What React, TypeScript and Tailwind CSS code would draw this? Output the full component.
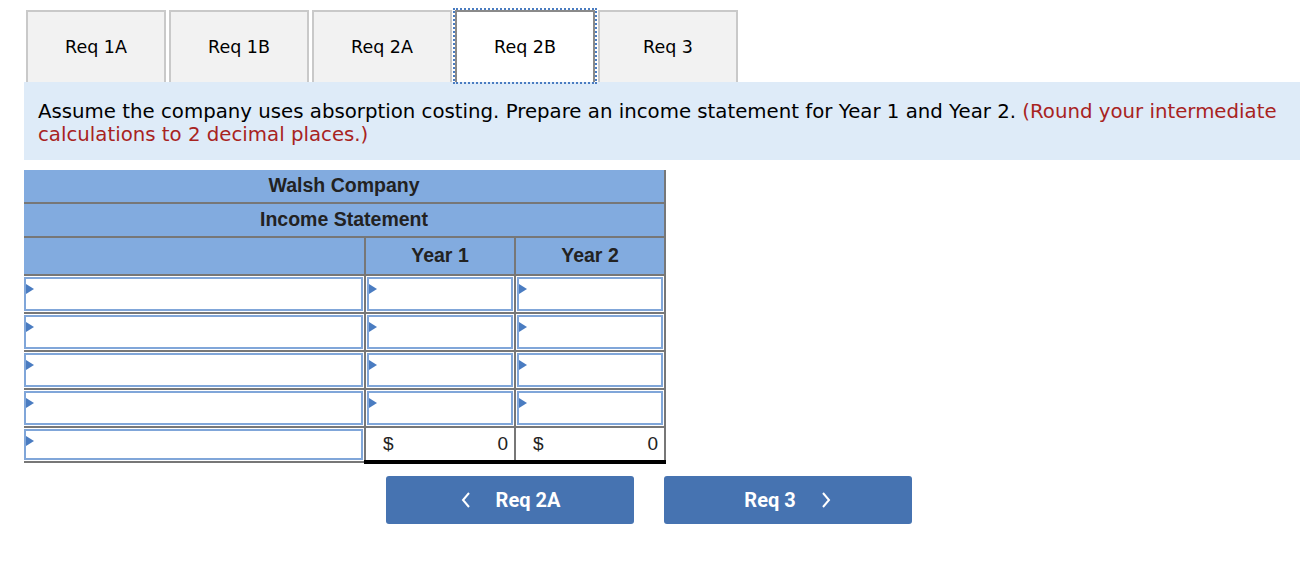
import React from "react";

const tabs = ["Req 1A", "Req 1B", "Req 2A", "Req 2B", "Req 3"];

function Marker() {
  return (
    <span className="absolute left-0 top-[5px] w-0 h-0 border-y-[5px] border-y-transparent border-l-[8px] border-l-[#4a7cc1]" />
  );
}

function InputCell({ topBlack = false, first = false, short = false }: { topBlack?: boolean; first?: boolean; short?: boolean }) {
  return (
    <td
      className={`border-2 border-[#777777] ${first ? "border-l-0 pl-0 pr-[1px] py-[1px]" : "p-[1px]"} ${topBlack ? "border-t-black" : ""}`}
    >
      <div className={`relative ${short ? "h-[31px]" : "h-[34px]"} bg-white border-2 border-[#80a6d9]`}>
        <Marker />
      </div>
    </td>
  );
}

function TotalCell() {
  return (
    <td className="border-2 border-[#777777] border-t-black border-b-4 border-b-black pl-[17px] pr-[6px] text-[19px] text-[#222]">
      <div className="flex justify-between">
        <span>$</span>
        <span>0</span>
      </div>
    </td>
  );
}

export default function App() {
  const rows = [0, 1, 2, 3];

  return (
    <div className="min-h-screen bg-white font-['DejaVu_Sans',Verdana,sans-serif]">
      {/* tabs */}
      <div className="flex pt-[10px] pl-[26px]">
        {tabs.map((t, i) => {
          const active = i === 3;
          return (
            <div
              key={t}
              className={
                active
                  ? "w-[140px] h-[72px] mr-[3px] flex items-center justify-center bg-white border-2 border-b-0 border-[#8a8a8a] outline-2 outline-dotted outline-[#4a7cc1] text-[17.5px] text-black"
                  : "w-[140px] h-[72px] mr-[3px] flex items-center justify-center bg-[#f2f2f2] border-2 border-b-0 border-[#c9c9c9] text-[17.5px] text-black"
              }
            >
              <span>{t}</span>
            </div>
          );
        })}
      </div>

      {/* instructions */}
      <div className="ml-[24px] w-[1276px] bg-[#deebf8] pl-[14px] pr-[10px] pt-[18px] pb-[14px] text-[19.75px] leading-[23px] text-black">
        Assume the company uses absorption costing. Prepare an income statement for Year 1 and Year 2.{" "}
        <span className="text-[#a8231f]">(Round your intermediate calculations to 2 decimal places.)</span>
      </div>

      {/* statement */}
      <div className="ml-[24px] mt-[10px]">
        <table className="border-collapse w-[641px] table-fixed font-['Liberation_Sans',Arial,sans-serif]">
          <colgroup>
            <col className="w-[341px]" />
            <col className="w-[150px]" />
            <col className="w-[150px]" />
          </colgroup>
          <tbody>
            <tr className="h-[33px] bg-[#82abdf]">
              <th colSpan={3} className="border-2 border-[#777777] border-t-0 border-l-0 text-[19.5px] font-bold text-[#222]">
                Walsh Company
              </th>
            </tr>
            <tr className="h-[34px] bg-[#82abdf]">
              <th colSpan={3} className="border-2 border-[#777777] border-l-0 text-[19.5px] font-bold text-[#222]">
                Income Statement
              </th>
            </tr>
            <tr className="h-[38px] bg-[#82abdf]">
              <th className="border-2 border-[#777777] border-l-0" />
              <th className="border-2 border-[#777777] text-[19.5px] font-bold text-[#222]">Year 1</th>
              <th className="border-2 border-[#777777] text-[19.5px] font-bold text-[#222]">Year 2</th>
            </tr>
            {rows.map((r) => (
              <tr key={r}>
                <InputCell first />
                <InputCell topBlack={r === 2} />
                <InputCell topBlack={r === 2} />
              </tr>
            ))}
            <tr>
              <InputCell first short />
              <TotalCell />
              <TotalCell />
            </tr>
          </tbody>
        </table>
      </div>

      {/* navigation */}
      <div className="flex gap-[30px] pl-[386px] mt-[12px] font-['Roboto',Arial,sans-serif]">
        <button className="w-[248px] h-[48px] rounded-[3px] bg-[#4673b1] text-white text-[20px] font-bold flex items-center justify-center gap-[24px]">
          <svg width="12" height="18" viewBox="0 0 12 18" fill="none" stroke="white" strokeWidth="2">
            <path d="M9 2 L3 9 L9 16" />
          </svg>
          <span>Req 2A</span>
        </button>
        <button className="w-[248px] h-[48px] rounded-[3px] bg-[#4673b1] text-white text-[20px] font-bold flex items-center justify-center gap-[24px]">
          <span>Req 3</span>
          <svg width="12" height="18" viewBox="0 0 12 18" fill="none" stroke="white" strokeWidth="2">
            <path d="M3 2 L9 9 L3 16" />
          </svg>
        </button>
      </div>
    </div>
  );
}
